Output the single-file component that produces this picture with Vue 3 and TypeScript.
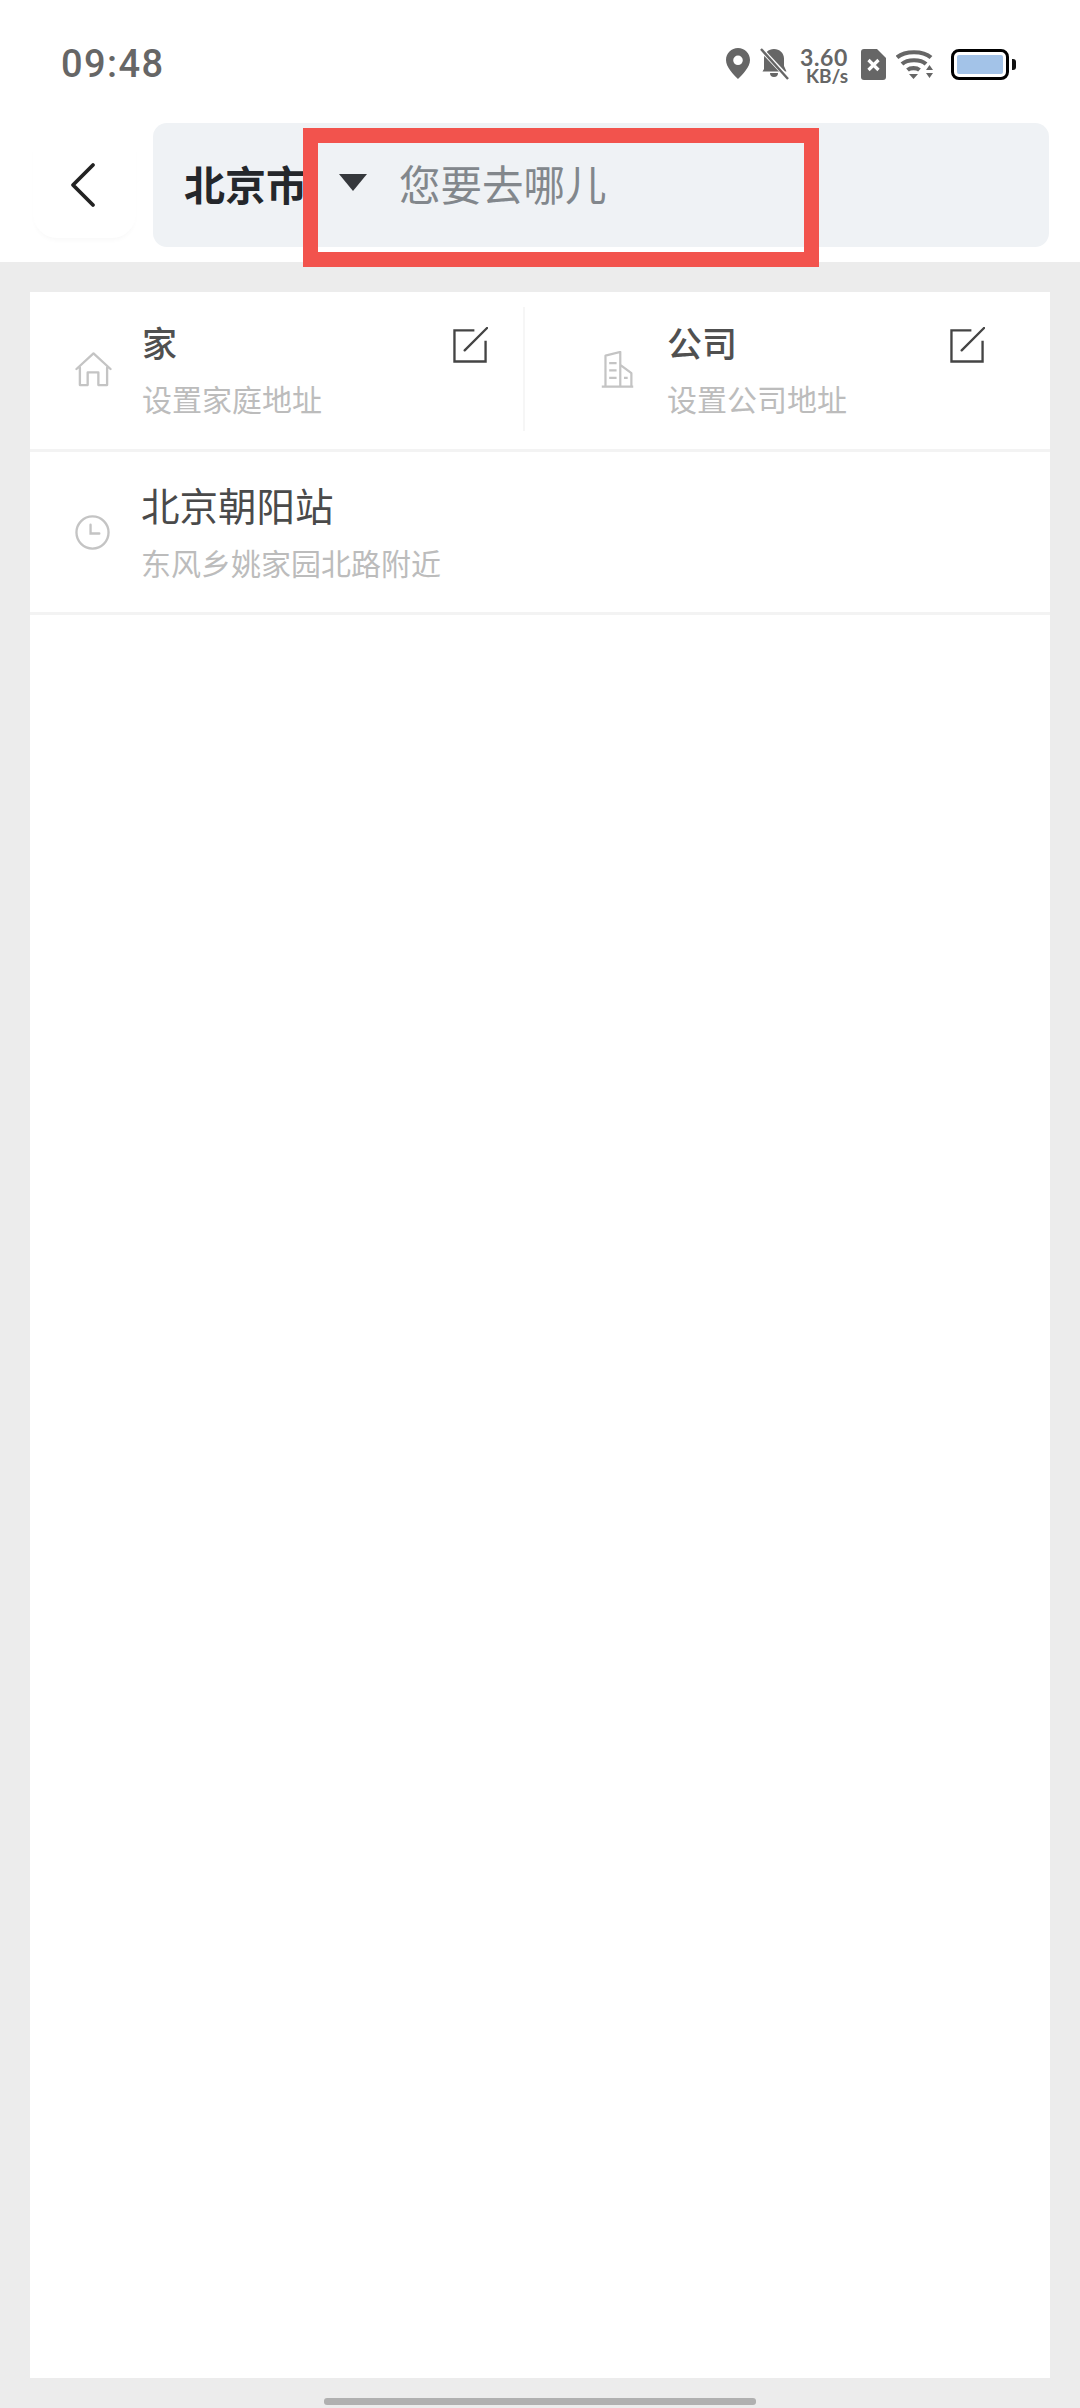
<script setup lang="ts">
interface Shortcut {
  key: string
  title: string
  hint: string
}

const shortcuts: Shortcut[] = [
  { key: 'home', title: '家', hint: '设置家庭地址' },
  { key: 'office', title: '公司', hint: '设置公司地址' },
]
</script>

<template>
  <div class="page">
    <header class="top">
      <div class="status">
        <span class="time">09:48</span>
        <div class="status-icons">
          <svg class="ic-pin" width="24" height="31" viewBox="0 0 24 31">
            <path fill="#666" fill-rule="evenodd" d="M12 0C5.400 0 0 5.300 0 12c0 7.400 7.600 14.600 12 19 4.400-4.400 12-11.600 12-19C24 5.300 18.600 0 12 0zm0 7.500a4.800 4.800 0 1 1 0 9.600 4.800 4.800 0 0 1 0-9.600z" />
          </svg>
          <svg class="ic-bell" width="29" height="32" viewBox="0 0 29 32">
            <path fill="#666" d="M14 1c5.500 0 10 4 10 9.500V18l2.500 5.500H2.500L4 21V10.500C4 5 8.500 1 14 1zM10 25h8a4 4 0 0 1-8 0z" />
            <path stroke="#fff" stroke-width="4.500" d="M0 0l28 30" />
            <path stroke="#666" stroke-width="2.400" d="M1 1l27 30" />
          </svg>
          <div class="speed">
            <span class="speed-num">3.60</span>
            <span class="speed-unit">KB/s</span>
          </div>
          <svg class="ic-sim" width="25" height="31" viewBox="0 0 25 31">
            <path fill="#666" d="M3 0h13l9 9v19a3 3 0 0 1-3 3H3a3 3 0 0 1-3-3V3a3 3 0 0 1 3-3z" />
            <path stroke="#fff" stroke-width="3.200" d="M7.500 11l10 10M17.500 11l-10 10" />
          </svg>
          <svg class="ic-wifi" width="38" height="29" viewBox="0 0 38 29">
            <path fill="none" stroke="#666" stroke-width="4.200" d="M1 7.500C9 .5 27 .5 35 7.500M6 14c5.500-5 18.500-5 24 0M11.500 20c3-2.500 9-2.500 12 0" />
            <path fill="#666" d="M13 24h9l-4.500 5zM33.500 15l3.500 5h-7zM30 23h7l-3.500 5z" />
          </svg>
          <div class="battery"><div class="battery-fill"></div></div>
          <div class="battery-nub"></div>
        </div>
      </div>
      <div class="nav">
        <button class="back" type="button" aria-label="返回">
          <svg width="26" height="46" viewBox="0 0 26 46">
            <path fill="none" stroke="#222" stroke-width="3.800" stroke-linecap="round" stroke-linejoin="round" d="M23 3L3 23l20 20" />
          </svg>
        </button>
        <div class="search">
          <span class="city">北京市</span>
          <span class="caret"></span>
          <span class="placeholder">您要去哪儿</span>
        </div>
      </div>
      <div class="mark"></div>
    </header>

    <main class="card">
      <section class="row row--shortcuts">
        <div v-for="item in shortcuts" :key="item.key" class="cell" :class="`cell--${item.key}`">
          <svg v-if="item.key === 'home'" class="lead" width="37" height="35" viewBox="0 0 38 36">
            <path fill="none" stroke="#c4c4c4" stroke-width="2.400" stroke-linejoin="round" stroke-linecap="round" d="M1.500 17.500L19 1.500l17.500 16M5 16v18h8V21h11v13h9V16" />
          </svg>
          <svg v-else class="lead" width="35" height="37" viewBox="0 0 36 40">
            <path fill="none" stroke="#c4c4c4" stroke-width="2.400" stroke-linejoin="round" d="M5 38V5l16-4v37M21 15l12 9v14M1 38.500h34" />
            <path fill="none" stroke="#c4c4c4" stroke-width="2.400" d="M9 13h8M9 21h8M9 29h8M25 29h4" />
          </svg>
          <div class="text">
            <div class="title title--bold">{{ item.title }}</div>
            <div class="hint">{{ item.hint }}</div>
          </div>
          <svg class="edit" width="35" height="36" viewBox="0 0 36 37">
            <path fill="none" stroke="#444" stroke-width="2.400" d="M22 3.500H1.500v32h32V14" />
            <path fill="none" stroke="#444" stroke-width="2.400" stroke-linecap="round" d="M12 24L35 1" />
          </svg>
        </div>
      </section>
      <section class="row row--recent">
        <svg class="lead" width="35" height="35" viewBox="0 0 36 36">
          <circle cx="18" cy="18" r="16.500" fill="none" stroke="#c4c4c4" stroke-width="2.400" />
          <path fill="none" stroke="#c4c4c4" stroke-width="2.400" stroke-linecap="round" d="M16 10v9h9" />
        </svg>
        <div class="text">
          <div class="title title--place">北京朝阳站</div>
          <div class="hint">东风乡姚家园北路附近</div>
        </div>
      </section>
    </main>

    <div class="handle"></div>
  </div>
</template>

<style scoped>
.page {
  position: relative;
  width: 1080px;
  height: 2408px;
  display: flex;
  flex-direction: column;
  overflow: hidden;
  background: #ececec;
  font-family: "Noto Sans CJK SC", "Noto Sans", sans-serif;
}

.top {
  position: relative;
  height: 262px;
  background: #fff;
}
.status {
  height: 123px;
  padding: 0 64px 0 61px;
  box-sizing: border-box;
  display: flex;
  align-items: flex-start;
  justify-content: space-between;
}
.time {
  margin-top: 39px;
  font: 500 38px/50px Roboto, sans-serif;
  letter-spacing: 1.400px;
  color: #666;
}
.status-icons {
  margin-top: 48px;
  display: flex;
  align-items: flex-start;
}
.ic-bell { margin-left: 10px; }
.speed {
  margin-left: 11px;
  width: 48px;
  height: 36px;
  display: flex;
  flex-direction: column;
  align-items: flex-end;
  font-family: Lato, sans-serif;
  color: #666;
  font-weight: 700;
}
.speed-num { font-size: 23px; line-height: 19px; letter-spacing: 0.600px; }
.speed-unit { font-size: 19px; line-height: 17px; }
.ic-sim { margin-left: 13px; margin-top: 1px; }
.ic-wifi { margin-left: 10px; margin-top: 2px; }
.battery {
  margin-left: 17px;
  margin-top: 1px;
  width: 58px;
  height: 31px;
  box-sizing: border-box;
  border: 3px solid #000;
  border-radius: 8px;
  padding: 3px;
}
.battery-fill {
  height: 100%;
  background: #a3c3e8;
  border-radius: 2px;
}
.battery-nub {
  margin-left: 3px;
  margin-top: 11px;
  width: 4px;
  height: 11px;
  background: #111;
  border-radius: 0 3px 3px 0;
}

.nav {
  display: flex;
  padding: 0 31px 0 33px;
}
.back {
  width: 103px;
  height: 110px;
  margin-top: 5px;
  padding: 34px 0 0 37px;
  box-sizing: border-box;
  display: flex;
  align-items: flex-start;
  border: 0;
  background: #fff;
  border-radius: 24px;
  box-shadow: 0 4px 5px -2px rgba(0, 0, 0, 0.03);
}
.back svg { display: block; }
.search {
  flex: 1;
  height: 124px;
  margin-left: 17px;
  padding-left: 31px;
  display: flex;
  align-items: center;
  background: #eff2f5;
  border-radius: 14px;
}
.city {
  width: 155px;
  margin-bottom: 4px;
  font-size: 41px;
  font-weight: 700;
  line-height: 56px;
  color: #24272b;
  white-space: nowrap;
}
.caret {
  width: 0;
  height: 0;
  border-left: 14px solid transparent;
  border-right: 14px solid transparent;
  border-top: 17px solid #35383c;
  margin-bottom: 6px;
}
.placeholder {
  margin-left: 32px;
  margin-bottom: 4px;
  font-size: 41.500px;
  line-height: 56px;
  color: #82878c;
  white-space: nowrap;
}
/* annotation frame drawn over the search bar */
.mark {
  position: absolute;
  left: 303px;
  top: 128px;
  width: 516px;
  height: 139px;
  box-sizing: border-box;
  border: 15px solid #f2534d;
}

.card {
  height: 2086px;
  margin: 30px 30px 0;
  background: #fff;
}
.row {
  box-sizing: border-box;
  border-bottom: 3px solid #f3f3f3;
  display: flex;
}
.row--shortcuts {
  height: 160px;
  padding: 15px 0 18px;
}
.row--recent {
  height: 163px;
  padding-left: 45px;
  align-items: center;
}
.cell {
  position: relative;
  display: flex;
  align-items: center;
  box-sizing: border-box;
}
.cell--home {
  width: 495px;
  flex: none;
  padding-left: 45px;
  border-right: 2px solid #f6f6f6;
}
.cell--office {
  flex: 1;
  padding-left: 75px;
}
.lead {
  flex: none;
  display: block;
}
.text {
  margin-left: 30px;
}
.cell--office .text {
  margin-left: 32px;
}
.row--recent .text {
  margin-left: 31px;
}
.title {
  font-size: 35px;
  line-height: 44px;
  color: #505050;
}
.title--bold { font-weight: 500; }
.title--place {
  font-size: 38.500px;
  color: #4a4a4a;
  margin-bottom: 16px;
}
.hint {
  font-size: 30px;
  line-height: 40px;
  color: #bcbcbc;
  white-space: nowrap;
}
.cell .title { margin-bottom: 14px; }
.edit {
  position: absolute;
  top: 20px;
  display: block;
}
.cell--home .edit { right: 35px; }
.cell--office .edit { right: 65px; }

.handle {
  width: 432px;
  height: 7px;
  margin: 20px auto 0;
  background: #b0b0b0;
  border-radius: 3px;
}
</style>
